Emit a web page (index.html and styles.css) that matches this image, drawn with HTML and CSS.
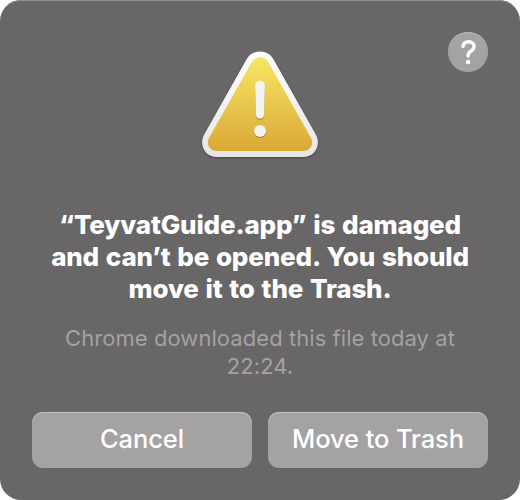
FILE: index.html
```
<!DOCTYPE html>
<html lang="en">
<head>
<meta charset="utf-8">
<title>Alert</title>
<link rel="stylesheet" href="styles.css">
</head>
<body>
<main class="dialog" role="alertdialog">
  <button class="help" aria-label="Help">
    <svg width="40" height="40" viewBox="0 0 40 40" fill="none">
      <path d="M15 14.2C15.400 11.200 17.500 9.700 20.500 9.700C23.800 9.700 26 11.600 26 14.400C26 16.800 24.700 18 22.700 19.200C20.800 20.400 20.200 21.300 20.200 23.600V24" stroke="#fff" stroke-width="3.5" stroke-linecap="round" stroke-linejoin="round"/>
      <circle cx="20.100" cy="30" r="2.300" fill="#fff"/>
    </svg>
  </button>
  <svg class="warning" width="128" height="118" viewBox="196 46 128 118">
    <defs>
      <linearGradient id="rim" x1="0" y1="0" x2="0" y2="1"><stop offset="0" stop-color="#fff"/><stop offset="1" stop-color="#e5e5e5"/></linearGradient>
      <linearGradient id="gold" x1="0" y1="0" x2="0" y2="1"><stop offset="0" stop-color="#f9e564"/><stop offset="1" stop-color="#d9a936"/></linearGradient>
    </defs>
    <path class="rim" fill="url(#rim)" d="M247 58.5C252.5 49 267.500 49 273 58.500L315.800 134.500C321.500 145 315 157 303 157H217C205 157 198.500 145 204.200 134.500Z"/>
    <path fill="url(#gold)" d="M252 61.800C255.500 55.800 264.500 55.800 268 61.800L310.600 137.300C314.500 144 310.500 151 303 151H217C209.500 151 205.500 144 209.400 137.300Z"/>
    <g class="mark" fill="#f3f3f3">
      <path d="M255 85.500C255 79 265 79 265 85.500L264 115C263.800 120 256.200 120 256 115Z"/>
      <circle cx="260" cy="131" r="6"/>
    </g>
  </svg>
  <h1 class="title">“TeyvatGuide.app” is damaged<br>and can’t be opened. You should<br>move it to the Trash.</h1>
  <p class="detail">Chrome downloaded this file today at<br>22:24.</p>
  <div class="actions">
    <button class="button">Cancel</button>
    <button class="button">Move to Trash</button>
  </div>
</main>
</body>
</html>
```
FILE: styles.css
```
* { box-sizing: border-box; }
body { margin: 0; background: #fff; font-family: Inter, "Liberation Sans", sans-serif; }
.dialog {
  position: relative;
  display: flex;
  flex-direction: column;
  align-items: center;
  width: 520px;
  height: 500px;
  padding: 46px 32px 32px;
  border-radius: 21px;
  background: #686667;
  box-shadow: inset 0 1px 0 #8c8b8b;
  text-align: center;
  white-space: nowrap;
}
.help {
  position: absolute;
  top: 32px;
  right: 32px;
  width: 40px;
  height: 40px;
  padding: 0;
  border: 0;
  border-radius: 50%;
  background: #a4a2a3;
  box-shadow: inset 0 1px 0 #bcbbbb;
}
.help svg, .warning { display: block; }
.rim { filter: drop-shadow(0 1px 1px rgba(0, 0, 0, .3)); }
.mark { filter: drop-shadow(0 1px .5px rgba(120, 85, 10, .6)); }
.title {
  margin: 45px 0 0;
  color: #fff;
  font-size: 26px;
  font-weight: 800;
  line-height: 32px;
  letter-spacing: -.17px;
  word-spacing: 1.3px;
}
.detail {
  margin: 19px 0 0;
  color: #a4a2a3;
  font-size: 22px;
  line-height: 28px;
  letter-spacing: .06px;
}
.actions { display: flex; gap: 16px; width: 100%; margin-top: auto; }
.button {
  flex: 1;
  height: 56px;
  padding: 0 0 3px;
  border: 0;
  border-radius: 11px;
  background: #a4a2a3;
  box-shadow: inset 0 1px 0 #c3c2c2;
  color: #fff;
  font: 500 25.5px Inter, "Liberation Sans", sans-serif;
  letter-spacing: -.1px;
}
```
